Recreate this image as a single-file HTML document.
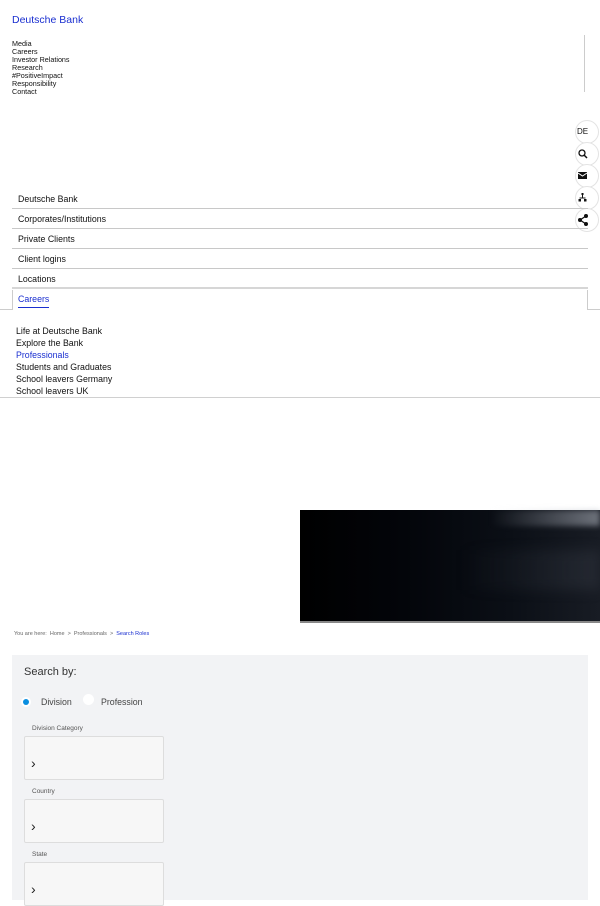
<!DOCTYPE html>
<html><head><meta charset="utf-8"><style>
*{margin:0;padding:0;box-sizing:border-box}
body{width:600px;height:900px;overflow:hidden;background:#fff;font-family:"Liberation Sans",sans-serif;color:#111;position:relative}
.a{position:absolute;white-space:nowrap}
.logo{left:12px;top:14px;font-size:10.5px;color:#1a2fd0}
.top{left:12px;top:39px;font-size:7.2px;line-height:8px;color:#111}
.vl{left:584px;top:35px;width:1px;height:57px;background:#ccc}
.c{position:absolute;left:575px;width:24px;height:24px;border:1px solid #e3e3e3;border-radius:50%;background:#fff}
.nav{left:12px;width:576px;height:20px;border-bottom:1px solid #c8c8c8;font-size:8.8px;padding-left:6px;line-height:20px}
.sub{left:16px;top:325px;font-size:8.8px;line-height:12px}
.panel{left:12px;top:655px;width:576px;height:245px;background:#f2f3f5}
.lbl{font-size:6.5px;color:#555;left:32px}
.box{left:24px;width:140px;height:44px;border:1px solid #ddd;background:#f7f7f7;border-radius:2px}
.box span{position:absolute;left:6px;top:18px;font-size:14px;color:#222}
</style></head><body>
<div class="a logo">Deutsche Bank</div>
<div class="a top" style="top:39.5px">Media<br>Careers<br>Investor Relations<br>Research<br>#PositiveImpact<br>Responsibility<br>Contact</div>
<div class="a vl"></div>
<div class="c" style="top:120px"><span class="a" style="left:1px;top:6px;font-size:8px">DE</span></div>
<div class="c" style="top:142px"><svg class="a" style="left:2px;top:6px" width="10" height="10"><circle cx="4" cy="4" r="3" fill="none" stroke="#111" stroke-width="1.3"/><path d="M6 6L9 9" stroke="#111" stroke-width="1.5"/></svg></div>
<div class="c" style="top:164px"><svg class="a" style="left:2px;top:7px" width="10" height="8"><rect width="9" height="7" fill="#111"/><path d="M0 1L4.5 4L9 1" stroke="#fff" fill="none"/></svg></div>
<div class="c" style="top:186px"><svg class="a" style="left:2px;top:6px" width="10" height="10"><rect x="3.5" y="0" width="2" height="2" fill="#111"/><path d="M4.5 2V5M1.5 5H7.5" stroke="#111"/><rect x="0.5" y="6" width="2.5" height="2.5" fill="#111"/><rect x="6" y="6" width="2.5" height="2.5" fill="#111"/></svg></div>
<div class="c" style="top:208px"><svg class="a" style="left:2px;top:5px" width="11" height="12"><circle cx="8" cy="2" r="2" fill="#111"/><circle cx="2" cy="6" r="2" fill="#111"/><circle cx="8" cy="10" r="2" fill="#111"/><path d="M8 2L2 6L8 10" stroke="#111" fill="none" stroke-width="1.2"/></svg></div>
<div class="a nav" style="top:189px">Deutsche Bank</div>
<div class="a nav" style="top:209px">Corporates/Institutions</div>
<div class="a nav" style="top:229px">Private Clients</div>
<div class="a nav" style="top:249px">Client logins</div>
<div class="a nav" style="top:269px;border-bottom:2px solid #d6d6d6">Locations</div>
<div class="a" style="left:12px;top:290px;width:576px;height:20px;border-left:1px solid #ccc;border-right:1px solid #ccc"></div>
<div class="a" style="left:0;top:309px;width:13px;height:1px;background:#ccc"></div>
<div class="a" style="left:587px;top:309px;width:13px;height:1px;background:#ccc"></div>
<div class="a" style="left:18px;top:294px;font-size:8.8px;color:#1a2fd0;border-bottom:1px solid #1a2fd0;padding-bottom:3px">Careers</div>
<div class="a sub">Life at Deutsche Bank<br>Explore the Bank<br><span style="color:#1a2fd0">Professionals</span><br>Students and Graduates<br>School leavers Germany<br>School leavers UK</div>
<div class="a" style="left:0;top:397px;width:600px;height:1px;background:#d0d0d0"></div>
<div class="a" style="left:300px;top:510px;width:300px;height:112px;background:linear-gradient(90deg,#000 0%,#03050a 35%,#0b0f16 70%,#181c24 100%)"><div class="a" style="right:0;top:0;width:110px;height:16px;background:linear-gradient(90deg,rgba(255,255,255,0),rgba(180,185,195,.55));filter:blur(3px)"></div><div class="a" style="left:160px;top:40px;width:140px;height:40px;background:linear-gradient(90deg,rgba(60,65,75,0),rgba(60,65,75,.35));filter:blur(6px)"></div></div>
<div class="a" style="left:300px;top:621px;width:300px;height:2px;background:#888"></div>
<div class="a" style="left:14px;top:631px;font-size:5.5px;color:#666">You are here: &nbsp;Home &nbsp;&gt; &nbsp;Professionals &nbsp;&gt; &nbsp;<span style="color:#1a2fd0">Search Roles</span></div>
<div class="a panel"></div>
<div class="a" style="left:24px;top:666px;font-size:11px;color:#333">Search by:</div>
<div class="a" style="left:21px;top:697px;width:10px;height:10px;border-radius:50%;background:#fff"><div class="a" style="left:2px;top:2px;width:6px;height:6px;border-radius:50%;background:#0a8ee0"></div></div>
<div class="a" style="left:41px;top:697px;font-size:8.8px;color:#444">Division</div>
<div class="a" style="left:83px;top:694px;width:11px;height:11px;border-radius:50%;background:#fff"></div>
<div class="a" style="left:101px;top:697px;font-size:8.8px;color:#444">Profession</div>
<div class="a lbl" style="top:725px">Division Category</div>
<div class="a box" style="top:736px"><span>›</span></div>
<div class="a lbl" style="top:788px">Country</div>
<div class="a box" style="top:799px"><span>›</span></div>
<div class="a lbl" style="top:851px">State</div>
<div class="a box" style="top:862px"><span>›</span></div>
</body></html>
